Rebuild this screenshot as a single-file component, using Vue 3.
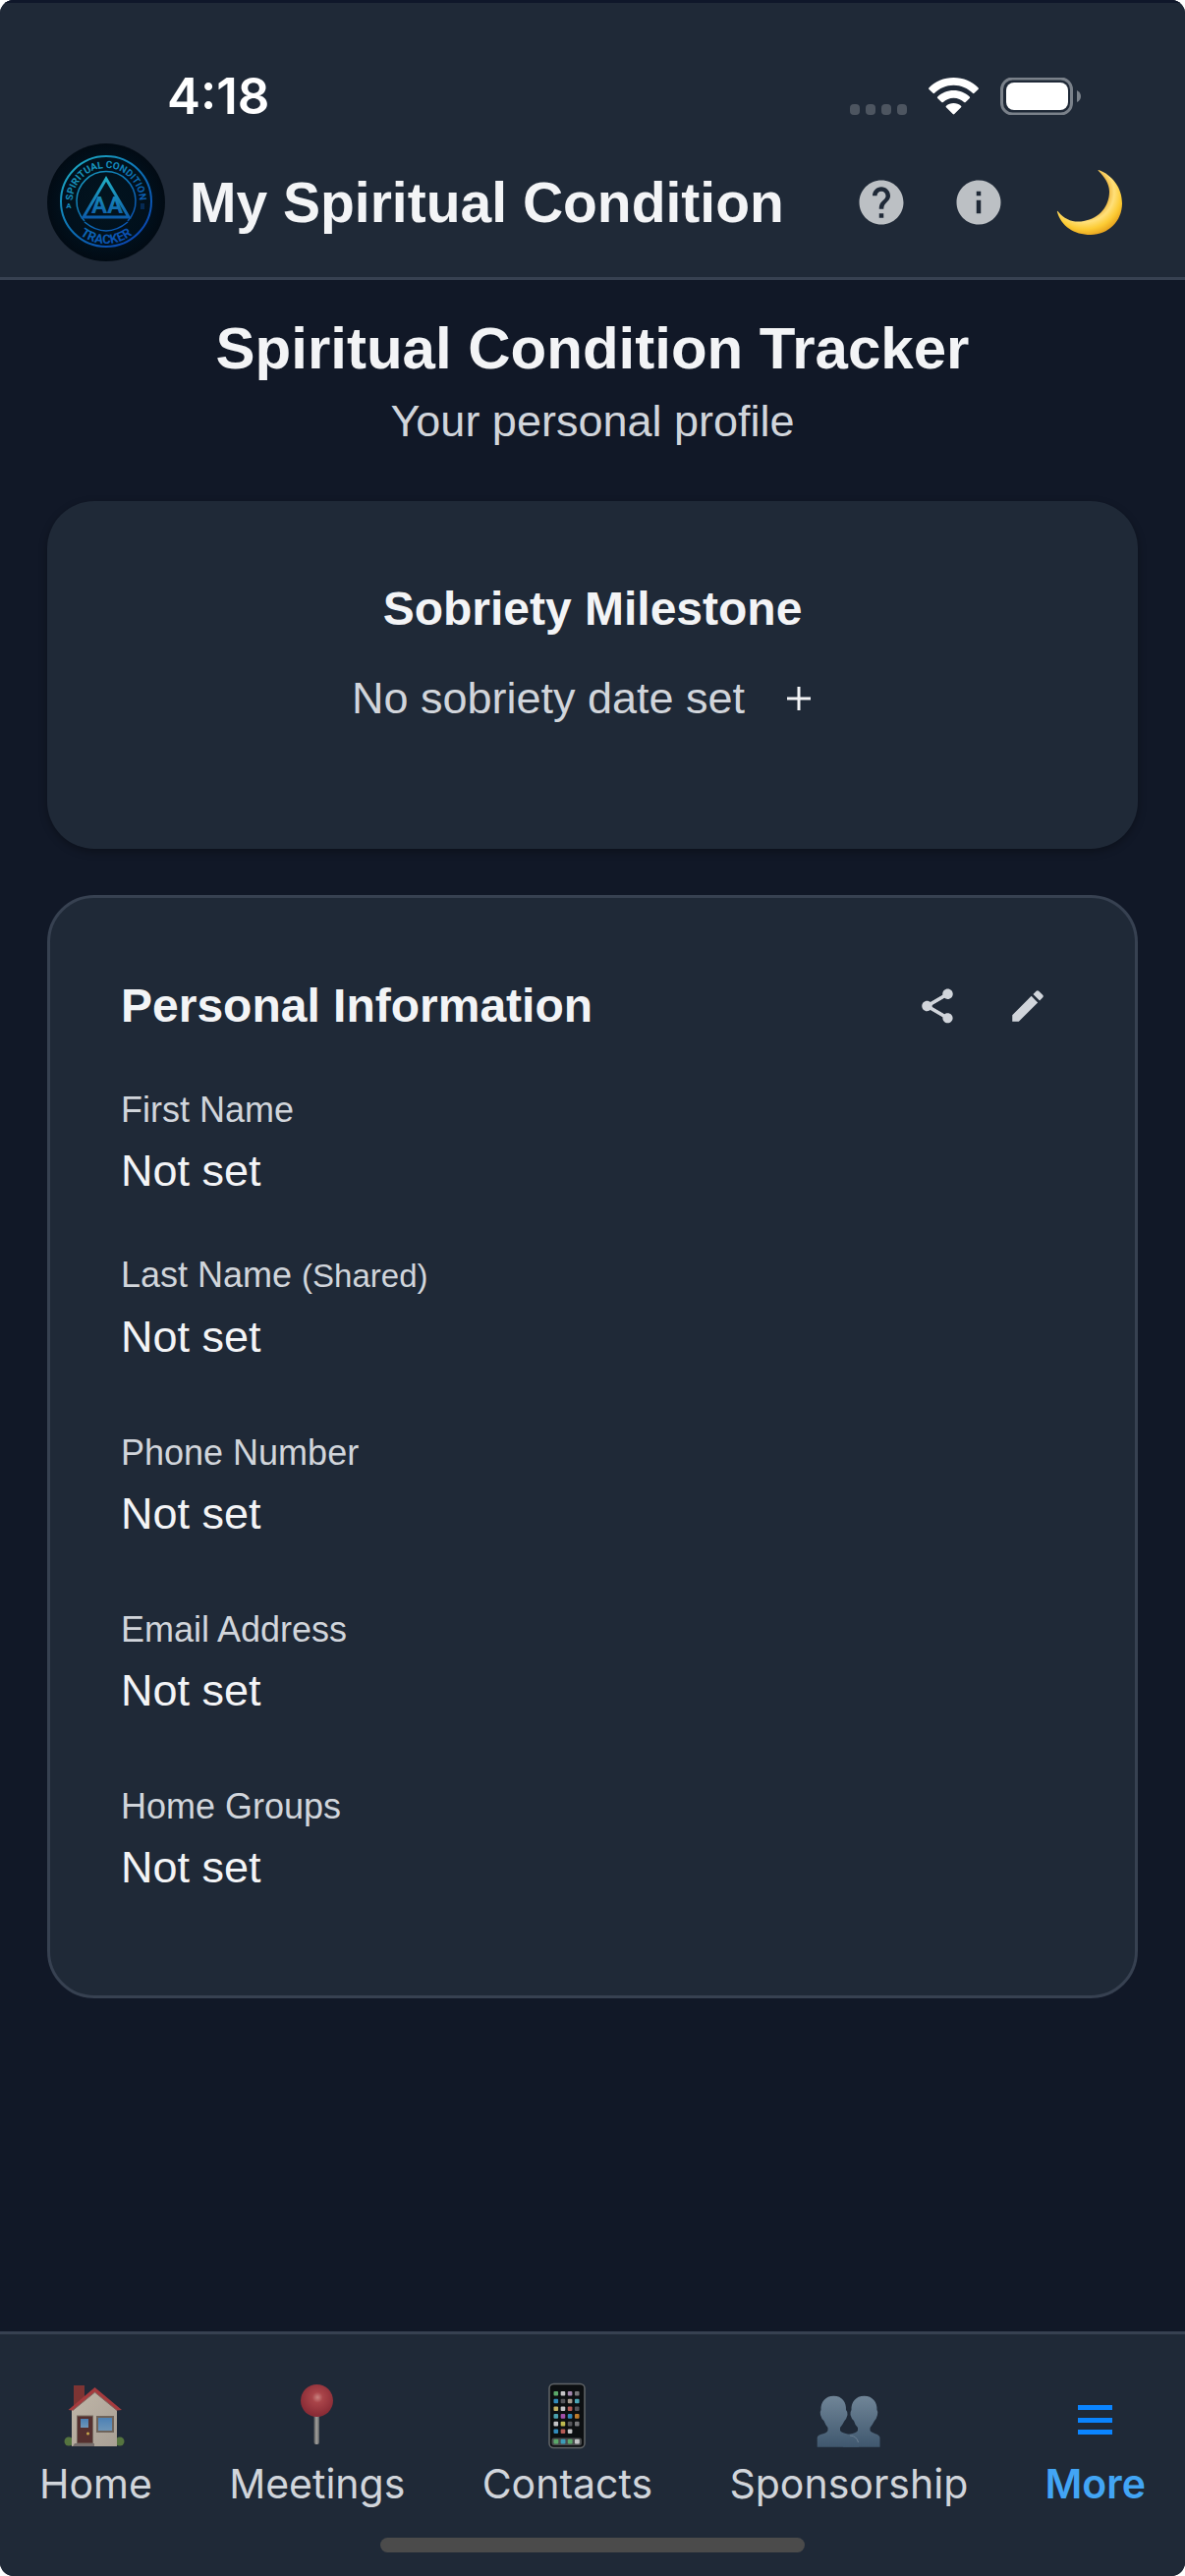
<script setup>
const fields = [
  { label: 'First Name', value: 'Not set' },
  { label: 'Last Name', note: '(Shared)', value: 'Not set' },
  { label: 'Phone Number', value: 'Not set' },
  { label: 'Email Address', value: 'Not set' },
  { label: 'Home Groups', value: 'Not set' },
]

const tabs = [
  { name: 'Home', icon: 'home' },
  { name: 'Meetings', icon: 'pin' },
  { name: 'Contacts', icon: 'phone' },
  { name: 'Sponsorship', icon: 'people' },
  { name: 'More', icon: 'menu', active: true },
]

// Home-screen tiles on the phone icon, row by row.
const tileRows = [
  ['#5aa869', '#c4c4c6', '#a487ae', '#77777a'],
  ['#3189ba', '#55555a', '#a59a8d', '#4aa5b5'],
  ['#c2b163', '#c4c4c6', '#b45b55', '#55555a'],
  ['#4aa0ad', '#a04fa8', '#3189ba', '#bd7b2c'],
  ['#c4c4c6', '#bdb94f', '#55555a', '#77777a'],
  ['#3189ba', '#b45b55', '#c4c4c6'],
]
const dock = ['#5aa869', '#3b9cb8', '#5aa869', '#c4c4c6']
</script>

<template>
  <div class="app">
    <header class="top">
      <div class="status">
        <span class="time">4:18</span>
        <div class="signals">
          <svg width="58" height="38" viewBox="0 0 58 38" fill="#4d5560" aria-hidden="true">
            <rect x="0" y="27" width="10" height="11" rx="4" />
            <rect x="16" y="27" width="10" height="11" rx="4" />
            <rect x="32" y="27" width="10" height="11" rx="4" />
            <rect x="48" y="27" width="10" height="11" rx="4" />
          </svg>
          <svg width="51" height="38" viewBox="0 0 51 38" fill="#fff" aria-hidden="true">
            <path d="M25.500 0C35.500 0 44.500 4 50.500 10.300Q51.300 11.200 50.500 12L46.500 15.800Q45.700 16.600 44.900 15.800C39.900 10.900 33 7.800 25.500 7.800C18 7.800 11.100 10.900 6.100 15.800Q5.300 16.600 4.500 15.800L0.500 12Q-0.300 11.200 0.500 10.300C6.500 4 15.500 0 25.500 0Z" />
            <path d="M25.500 13C31.900 13 37.600 15.500 41.800 19.500Q42.600 20.300 41.800 21.100L37.700 25Q36.900 25.700 36.100 25C33.300 22.400 29.600 20.800 25.500 20.800C21.400 20.800 17.700 22.400 14.900 25Q14.100 25.700 13.300 25L9.200 21.100Q8.400 20.300 9.200 19.500C13.400 15.500 19.100 13 25.500 13Z" />
            <path d="M25.500 26C28.400 26 31 27 33 28.700Q33.900 29.500 33.100 30.300L26.300 37Q25.500 37.800 24.700 37L17.900 30.300Q17.100 29.500 18 28.700C20 27 22.600 26 25.500 26Z" />
          </svg>
          <svg width="82" height="38" viewBox="0 0 82 38" aria-hidden="true">
            <rect x="1.500" y="1" width="71" height="36" rx="11" fill="none" stroke="#7a818a" stroke-width="3" />
            <rect x="6" y="5" width="63" height="28" rx="8" fill="#fff" />
            <path d="M78 13Q82 15 82 19T78 25Z" fill="#7a818a" />
          </svg>
        </div>
      </div>

      <div class="bar">
        <svg class="logo" viewBox="0 0 120 120" role="img" aria-label="Spiritual Condition Tracker logo">
          <defs>
            <radialGradient id="logo-bg">
              <stop offset="0" stop-color="#02141f" />
              <stop offset="0.750" stop-color="#01101c" />
              <stop offset="1" stop-color="#020b14" />
            </radialGradient>
            <linearGradient id="logo-ring" x1="20" y1="15" x2="95" y2="105" gradientUnits="userSpaceOnUse">
              <stop offset="0" stop-color="#1fb0c4" />
              <stop offset="0.500" stop-color="#0c70b5" />
              <stop offset="1" stop-color="#0a3fb0" />
            </linearGradient>
            <linearGradient id="logo-mark" x1="0" y1="33" x2="0" y2="78" gradientUnits="userSpaceOnUse">
              <stop offset="0" stop-color="#22b3c6" />
              <stop offset="1" stop-color="#0c57a8" />
            </linearGradient>
            <path id="logo-arc-top" d="M26 66V59A34 34 0 0 1 94 59V66" />
            <path id="logo-arc-bottom" d="M17 59A43 43 0 0 0 103 59" />
          </defs>
          <circle cx="60" cy="60" r="60" fill="url(#logo-bg)" />
          <g fill="none" stroke="url(#logo-ring)">
            <circle cx="60" cy="59" r="46" stroke-width="2" />
            <path d="M38 79A30 30 0 1 1 82 79M38 80Q60 98 82 80" stroke-width="1.500" />
          </g>
          <g fill="none" stroke="url(#logo-mark)">
            <path d="M60 36L37 75H83Z" stroke-width="3" />
          </g>
          <g class="logo-text" fill="url(#logo-ring)" text-anchor="middle">
            <text font-size="10"><textPath href="#logo-arc-top" startOffset="50%">SPIRITUAL CONDITION</textPath></text>
            <text font-size="13"><textPath href="#logo-arc-bottom" startOffset="50%">TRACKER</textPath></text>
            <text x="61" y="71" font-size="24" fill="url(#logo-mark)">AA</text>
            <text x="22" y="66" font-size="8">A</text>
          </g>
          <path d="M95 62H99M95 64H99M95 66H99" stroke="#0b4389" stroke-width="1" />
        </svg>
        <div class="brand">My Spiritual Condition</div>
        <button class="icon-btn" type="button" aria-label="Help">
          <svg width="54" height="54" viewBox="0 0 24 24" fill="#bcc0c4">
            <path d="M12 2C6.480 2 2 6.480 2 12s4.480 10 10 10 10-4.480 10-10S17.520 2 12 2zm1 17h-2v-2h2v2zm2.070-7.750l-.9.920C13.450 12.900 13 13.500 13 15h-2v-.5c0-1.100.45-2.100 1.170-2.830l1.240-1.260c.37-.36.59-.86.59-1.410 0-1.100-.9-2-2-2s-2 .9-2 2H8c0-2.210 1.790-4 4-4s4 1.790 4 4c0 .88-.36 1.680-.93 2.250z" />
          </svg>
        </button>
        <button class="icon-btn" type="button" aria-label="About">
          <svg width="54" height="54" viewBox="0 0 24 24" fill="#bcc0c4">
            <path d="M12 2C6.480 2 2 6.480 2 12s4.480 10 10 10 10-4.480 10-10S17.520 2 12 2zm1 15h-2v-6h2v6zm0-8h-2V7h2v2z" />
          </svg>
        </button>
        <button class="icon-btn" type="button" aria-label="Toggle dark mode">
          <svg width="76" height="76" viewBox="0 0 76 76">
            <defs>
              <radialGradient id="moon" cx="36" cy="28" r="44" gradientUnits="userSpaceOnUse">
                <stop offset="0.500" stop-color="#e9a82c" />
                <stop offset="0.680" stop-color="#ffe07a" />
                <stop offset="0.850" stop-color="#fccb34" />
                <stop offset="1" stop-color="#e8a51f" />
              </radialGradient>
            </defs>
            <path d="M50 5C64 10 74 23 74 39C74 57 60 71 42 71C25 71 12 62 8 48Q7.500 46 9 47.500C16 56 25 59 35 57C51 54 61 42 61 27C61 19 56 12 50 6Q49 4.500 50 5Z" fill="url(#moon)" />
          </svg>
        </button>
      </div>
    </header>

    <main class="content">
      <h1>Spiritual Condition Tracker</h1>
      <p class="subtitle">Your personal profile</p>

      <section class="card milestone">
        <h2>Sobriety Milestone</h2>
        <div class="date-row">
          <span>No sobriety date set</span>
          <button class="add" type="button" aria-label="Set sobriety date">
            <svg width="26" height="26" viewBox="0 0 26 26" stroke="#f3f4f6" stroke-width="3">
              <path d="M13 1V25M1 13H25" />
            </svg>
          </button>
        </div>
      </section>

      <section class="card info">
        <div class="info-head">
          <h2>Personal Information</h2>
          <button class="icon-btn" type="button" aria-label="Share">
            <svg width="42" height="42" viewBox="0 0 24 24" fill="#d1d5db">
              <path d="M18 16.080c-.76 0-1.440.3-1.960.77L8.910 12.700c.05-.23.09-.46.09-.7s-.04-.47-.09-.7l7.050-4.110c.54.5 1.250.81 2.040.81 1.660 0 3-1.340 3-3s-1.340-3-3-3-3 1.340-3 3c0 .24.04.47.09.7L8.040 9.810C7.500 9.310 6.790 9 6 9c-1.660 0-3 1.340-3 3s1.340 3 3 3c.79 0 1.500-.31 2.040-.81l7.120 4.160c-.05.21-.08.43-.08.65 0 1.610 1.310 2.920 2.920 2.920s2.920-1.310 2.920-2.920-1.310-2.920-2.920-2.920z" />
              <path d="M6 12L18 5M6 12L18 19" stroke="#d1d5db" stroke-width="2" />
            </svg>
          </button>
          <button class="icon-btn" type="button" aria-label="Edit">
            <svg width="42" height="42" viewBox="0 0 24 24" fill="#d1d5db">
              <path d="M3 17.250V21h3.750L17.810 9.940l-3.750-3.750L3 17.250zM20.710 7.040c.39-.39.39-1.020 0-1.410l-2.340-2.340c-.39-.39-1.020-.39-1.410 0l-1.830 1.830 3.750 3.750 1.830-1.830z" />
            </svg>
          </button>
        </div>
        <dl class="fields">
          <div v-for="field in fields" :key="field.label" class="field">
            <dt>{{ field.label }} <small v-if="field.note">{{ field.note }}</small></dt>
            <dd>{{ field.value }}</dd>
          </div>
        </dl>
      </section>
    </main>

    <footer class="bottom">
      <nav class="tabs">
        <a v-for="tab in tabs" :key="tab.name" href="#" class="tab" :class="{ active: tab.active }">
          <svg v-if="tab.icon === 'home'" class="tab-icon" viewBox="0 0 72 72">
            <defs>
              <linearGradient id="wall" x1="0" y1="0" x2="1" y2="1">
                <stop offset="0" stop-color="#c0b6a8" />
                <stop offset="1" stop-color="#a9a095" />
              </linearGradient>
              <linearGradient id="glass" x1="0" y1="0" x2="0" y2="1">
                <stop offset="0" stop-color="#4a80b5" />
                <stop offset="1" stop-color="#6f96b8" />
              </linearGradient>
            </defs>
            <path d="M14 4H25V16L14 25Z" fill="#7d3433" />
            <circle cx="9" cy="61" r="4.500" fill="#55743f" />
            <circle cx="61" cy="61" r="4.500" fill="#55743f" />
            <path d="M12 28L35.500 9L58 28V66H12Z" fill="url(#wall)" />
            <path d="M8.500 29L35.500 6L63 29L58 29.500L35.500 11L13 29.500Z" fill="#a53b3e" />
            <path d="M13 29.500L35.500 11L58 29.500" fill="none" stroke="#7e6660" stroke-width="1" />
            <rect x="17.500" y="35" width="16" height="28" fill="#55302f" stroke="#776a60" />
            <rect x="21" y="38" width="8" height="9" fill="url(#glass)" />
            <circle cx="28.500" cy="53" r="1.500" fill="#c7a74c" />
            <path d="M15 63H35V66H13Z" fill="#776f6d" />
            <rect x="38" y="36" width="16" height="15" fill="url(#glass)" stroke="#6f645b" stroke-width="2" />
          </svg>
          <svg v-else-if="tab.icon === 'pin'" class="tab-icon" viewBox="0 0 72 72">
            <defs>
              <radialGradient id="pin-ball" cx="0.520" cy="0.400" r="0.550">
                <stop offset="0" stop-color="#c98380" />
                <stop offset="0.300" stop-color="#a94449" />
                <stop offset="1" stop-color="#8a2c36" />
              </radialGradient>
              <linearGradient id="pin-stick" x1="0" y1="0" x2="1" y2="0">
                <stop offset="0" stop-color="#565a5d" />
                <stop offset="0.500" stop-color="#a3a19d" />
                <stop offset="1" stop-color="#565a5d" />
              </linearGradient>
            </defs>
            <rect x="32.500" y="33" width="5.500" height="31" rx="2" fill="url(#pin-stick)" />
            <circle cx="35.500" cy="19.500" r="16.500" fill="url(#pin-ball)" />
          </svg>
          <svg v-else-if="tab.icon === 'phone'" class="tab-icon" viewBox="0 0 72 72">
            <rect x="18" y="2.500" width="36" height="65" rx="4.500" fill="#0c0f11" stroke="#616568" stroke-width="1.500" />
            <rect x="20.500" y="57.500" width="30.500" height="7.500" rx="2" fill="#4a4c4e" />
            <g v-for="(row, r) in tileRows" :key="r">
              <rect v-for="(color, c) in row" :key="c" :x="22.5 + c * 7.15" :y="10 + r * 7.7" width="4.600" height="4.600" rx="1" :fill="color" />
            </g>
            <rect v-for="(color, c) in dock" :key="'dock' + c" :x="22.5 + c * 7.15" y="58.700" width="4.800" height="4.800" rx="1" :fill="color" />
          </svg>
          <svg v-else-if="tab.icon === 'people'" class="tab-icon" viewBox="0 0 72 72">
            <defs>
              <linearGradient id="bust" x1="0" y1="14" x2="0" y2="67" gradientUnits="userSpaceOnUse">
                <stop offset="0" stop-color="#718698" />
                <stop offset="1" stop-color="#3f576e" />
              </linearGradient>
            </defs>
            <g fill="url(#bust)">
              <path d="M51.500 14.700C60 14.700 65 21 64.500 29Q66 31 65 34Q64 38 62 40Q60 44 57.500 47V50C59 53 67 53 67.500 57V66.700H30V57C31 53 43 54 45 50V47Q42 44 41 40Q38.500 38 37.500 34Q37 31 38.500 29C38 21 43 14.700 51.500 14.700Z" />
              <path d="M20.500 14.700C29 14.700 33.500 21 33 29Q35 31 34.500 34Q33.500 38 31.500 40Q29.500 44 27 47V50C29 54 42 53 44.500 58L46 66.700H3.700V57C4.500 53 13 54 14.500 50V47Q12 44 10.500 40Q8 38 7 34Q6 31 7.500 29C7 21 12 14.700 20.500 14.700Z" />
            </g>
            <path d="M37 55Q44 55.500 45.500 62" fill="none" stroke="#6b7f91" stroke-width="1" />
          </svg>
          <svg v-else class="tab-icon" viewBox="0 0 72 72" fill="#0a84ff">
            <path d="M18 24H53V29H18ZM18 37H53V42H18ZM18 49H53V54H18Z" />
          </svg>
          <span>{{ tab.name }}</span>
        </a>
      </nav>
      <div class="home-indicator"></div>
    </footer>
  </div>
</template>

<style>
body {
  background: #fff;
}
</style>

<style scoped>
.app {
  display: flex;
  flex-direction: column;
  min-height: 100vh;
  border-radius: 14px;
  overflow: hidden;
  background: #111827;
  color: #f3f4f6;
  font-family: "Liberation Sans", Arial, Helvetica, sans-serif;
}

h1,
h2,
p,
dl,
dd {
  margin: 0;
}

button {
  padding: 0;
  border: 0;
  background: none;
  color: inherit;
}

svg {
  display: block;
}

.top {
  border-top: 3px solid #0f172a;
  border-bottom: 3px solid #374151;
  background: #1f2937;
}

.status {
  display: flex;
  align-items: center;
  justify-content: space-between;
  padding: 65px 106px 0 170px;
}

.time {
  color: #fff;
  font: 600 51px/60px Inter, sans-serif;
}

.signals {
  display: flex;
  gap: 22px;
}

.bar {
  display: flex;
  align-items: center;
  gap: 45px;
  padding: 18px 62px 16px 48px;
}

.logo {
  flex: none;
  width: 120px;
  height: 120px;
}

.logo-text {
  font-family: Roboto, sans-serif;
  font-weight: 700;
}

.brand {
  flex: 1;
  margin-left: -20px;
  font-size: 57px;
  font-weight: 700;
  line-height: 72px;
  white-space: nowrap;
}

.content {
  flex: 1;
  padding: 34px 48px 48px;
}

h1 {
  margin-bottom: 8px;
  font-size: 60px;
  line-height: 72px;
  text-align: center;
}

.subtitle {
  margin-bottom: 51px;
  color: #d1d5db;
  font-size: 45px;
  line-height: 60px;
  text-align: center;
}

.card {
  border-radius: 48px;
  background: #1f2937;
}

h2 {
  font-size: 48px;
  line-height: 60px;
}

.milestone {
  margin-bottom: 47px;
  padding: 80px 48px 123px;
  box-shadow: 0 3px 9px rgba(0, 0, 0, 0.3);
  text-align: center;
}

.date-row {
  display: flex;
  justify-content: center;
  gap: 20px;
  margin-top: 31px;
  color: #d1d5db;
  font-size: 45px;
  line-height: 60px;
}

.add {
  display: grid;
  place-items: center;
  width: 70px;
}

.info {
  padding: 80px 72px 100px;
  border: 3px solid #374151;
}

.info-head {
  display: flex;
  align-items: center;
  gap: 50px;
  margin-bottom: 52px;
  padding-right: 16px;
}

.info-head h2 {
  flex: 1;
}

.fields {
  display: flex;
  flex-direction: column;
  gap: 64px;
}

.field:first-child {
  margin-bottom: -12px;
}

dt {
  margin-bottom: 8px;
  color: #d1d5db;
  font-size: 36px;
  line-height: 48px;
}

dt small {
  font-size: 33px;
}

dd {
  font-size: 45px;
  line-height: 60px;
}

.bottom {
  padding: 48px 40px 24px;
  border-top: 3px solid #374151;
  background: #1f2937;
}

.tabs {
  display: flex;
  justify-content: space-between;
}

.tab {
  display: flex;
  flex-direction: column;
  align-items: center;
  gap: 8px;
  color: #d1d5db;
  font: 400 41px/48px Inter, sans-serif;
  text-decoration: none;
}

.tab.active {
  color: #42a5f5;
  font-weight: 600;
}

.tab-icon {
  width: 72px;
  height: 72px;
}

.home-indicator {
  width: 432px;
  height: 15px;
  margin: 31px auto 0;
  border-radius: 8px;
  background: #4b4b4b;
}
</style>
